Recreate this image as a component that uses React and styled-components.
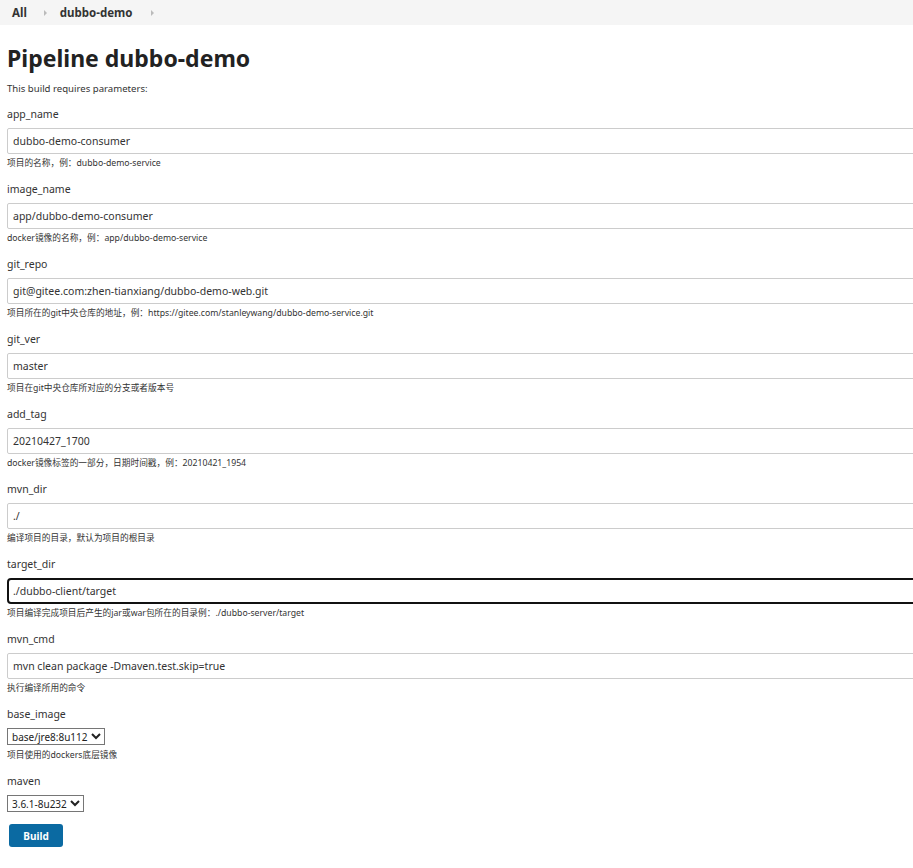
import React from "react"
import styled, { createGlobalStyle } from "styled-components"

const GlobalStyle = createGlobalStyle`
    body {
        margin: 0;
        padding: 0;
        background: #fff;
        overflow-x: hidden;
        font-family: "Noto Sans", "Open Sans", "Noto Sans CJK SC", sans-serif;
        color: #333;
    }
`

const Breadcrumbs = styled.div`
    height: 25px;
    background-color: #f5f5f5;
    display: flex;
    align-items: center;
    padding-left: 12px;
`

const Crumb = styled.span`
    font-size: 11.5px;
    font-weight: 700;
    color: #333;
    line-height: 25px;
`

const CrumbArrow = styled.span`
    display: inline-block;
    width: 0;
    height: 0;
    border-top: 3px solid transparent;
    border-bottom: 3px solid transparent;
    border-left: 3px solid #bbb;
    margin: 0 ${props => props.right}px 0 ${props => props.left}px;
`

const Main = styled.div`
    padding: 0 0 0 7px;
    display: flex;
    flex-direction: column;
    align-items: flex-start;
`

const Title = styled.h1`
    margin: 17px 0 8px 0;
    font-size: 23px;
    line-height: 32px;
    font-weight: 700;
    color: #222;
`

const Intro = styled.p`
    margin: 0 0 10px 0;
    font-size: 9.6px;
    line-height: 14px;
`

const Field = styled.div`
    display: flex;
    flex-direction: column;
    align-items: flex-start;
    margin-bottom: ${props => props.last ? 9 : 10}px;
    width: 100%;
`

const Label = styled.label`
    font-size: 10.5px;
    line-height: 16px;
    margin-bottom: 6px;
    color: #333;
`

const TextInput = styled.input`
    box-sizing: border-box;
    width: 940px;
    height: 26px;
    margin: 0 0 2px 0;
    padding: 0 5px;
    font-family: inherit;
    font-size: 10.5px;
    color: #333;
    background: #fff;
    border: ${props => props.focused ? "2px solid #111" : "1px solid #ccc"};
    padding-left: ${props => props.focused ? 4 : 5}px;
    border-radius: ${props => props.focused ? 4 : 2}px;
    outline: none;
`

const Desc = styled.div`
    font-size: 8.7px;
    line-height: 14px;
    color: #333;
    margin-bottom: 1px;
`

const Select = styled.select`
    box-sizing: border-box;
    height: 17px;
    margin: 0 0 3px 0;
    padding: 0;
    font-family: inherit;
    font-size: 10px;
    color: #222;
    background: #fff;
    border: 1px solid #767676;
    border-radius: 0;
`

const BuildBtn = styled.button`
    margin-left: 2px;
    width: 54px;
    height: 23px;
    background-color: #0b6aa2;
    color: #fff;
    border: none;
    border-radius: 3px;
    font-family: inherit;
    font-size: 10px;
    font-weight: 700;
    cursor: pointer;
`

const params = [
    { name: "app_name", value: "dubbo-demo-consumer", desc: "项目的名称，例：dubbo-demo-service" },
    { name: "image_name", value: "app/dubbo-demo-consumer", desc: "docker镜像的名称，例：app/dubbo-demo-service" },
    { name: "git_repo", value: "git@gitee.com:zhen-tianxiang/dubbo-demo-web.git", desc: "项目所在的git中央仓库的地址，例：https://gitee.com/stanleywang/dubbo-demo-service.git" },
    { name: "git_ver", value: "master", desc: "项目在git中央仓库所对应的分支或者版本号" },
    { name: "add_tag", value: "20210427_1700", desc: "docker镜像标签的一部分，日期时间戳，例：20210421_1954" },
    { name: "mvn_dir", value: "./", desc: "编译项目的目录，默认为项目的根目录" },
    { name: "target_dir", value: "./dubbo-client/target", desc: "项目编译完成项目后产生的jar或war包所在的目录例：./dubbo-server/target", focused: true },
    { name: "mvn_cmd", value: "mvn clean package -Dmaven.test.skip=true", desc: "执行编译所用的命令" },
]

const App = () => (
    <>
        <GlobalStyle />
        <Breadcrumbs>
            <Crumb>All</Crumb>
            <CrumbArrow left={17} right={13} />
            <Crumb>dubbo-demo</Crumb>
            <CrumbArrow left={18} right={0} />
        </Breadcrumbs>
        <Main>
            <Title>Pipeline dubbo-demo</Title>
            <Intro>This build requires parameters:</Intro>
            {params.map(p => (
                <Field key={p.name}>
                    <Label>{p.name}</Label>
                    <TextInput defaultValue={p.value} focused={p.focused ? 1 : 0} />
                    <Desc>{p.desc}</Desc>
                </Field>
            ))}
            <Field>
                <Label>base_image</Label>
                <Select defaultValue="base/jre8:8u112">
                    <option>base/jre8:8u112</option>
                </Select>
                <Desc>项目使用的dockers底层镜像</Desc>
            </Field>
            <Field last>
                <Label>maven</Label>
                <Select defaultValue="3.6.1-8u232">
                    <option>3.6.1-8u232</option>
                </Select>
            </Field>
            <BuildBtn>Build</BuildBtn>
        </Main>
    </>
)

export default App
